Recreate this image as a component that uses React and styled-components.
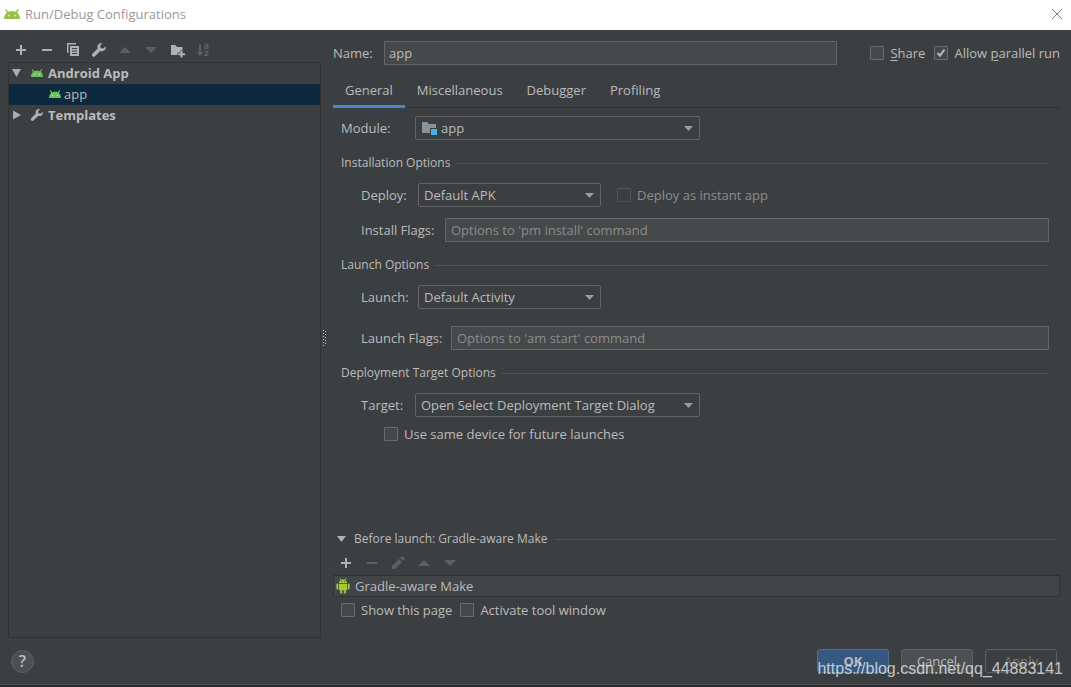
import React, { useState } from 'react';
import styled, { createGlobalStyle } from 'styled-components';

const tabs = ['General', 'Miscellaneous', 'Debugger', 'Profiling'];

export default function App() {
  const [tab, setTab] = useState('General');

  return (
    <Window>
      <GlobalStyle />
      <TitleBar>
        <AndroidHead width={16} height={10} color="#97c14b" />
        <WindowTitle>Run/Debug Configurations</WindowTitle>
        <CloseButton aria-label="Close">
          <svg width="12" height="12" viewBox="0 0 12 12" stroke="#7a7a7a" fill="none">
            <path d="M1 1L11 11M11 1L1 11" />
          </svg>
        </CloseButton>
      </TitleBar>

      <Content>
        <Sidebar>
          <Toolbar $side>
            <ToolButton aria-label="Add"><PlusIcon /></ToolButton>
            <ToolButton aria-label="Remove"><MinusIcon /></ToolButton>
            <ToolButton aria-label="Copy"><CopyIcon /></ToolButton>
            <ToolButton aria-label="Edit templates"><WrenchIcon size={16} /></ToolButton>
            <ToolButton aria-label="Move up" disabled><UpIcon /></ToolButton>
            <ToolButton aria-label="Move down" disabled><DownIcon /></ToolButton>
            <ToolButton aria-label="New folder"><FolderAddIcon /></ToolButton>
            <ToolButton aria-label="Sort" disabled><SortIcon /></ToolButton>
          </Toolbar>
          <Tree>
            <TreeRow $bold>
              <TreeArrow open />
              <TreeIcon><AndroidHead width={12} height={8} color="#6cc05c" /></TreeIcon>
              Android App
            </TreeRow>
            <TreeRow $child $selected>
              <TreeIcon><AndroidHead width={12} height={8} color="#6cc05c" /></TreeIcon>
              app
            </TreeRow>
            <TreeRow $bold>
              <TreeArrow />
              <TreeIcon><WrenchIcon size={14} /></TreeIcon>
              Templates
            </TreeRow>
          </Tree>
        </Sidebar>

        <Splitter>
          <svg width="4" height="16" viewBox="0 0 4 16" fill="none">
            <path d="M0.5 0V16M2.5 1V16" stroke="#c8c8c8" strokeDasharray="1 2" />
          </svg>
        </Splitter>

        <Main>
          <NameRow>
            <Label htmlFor="name" $width={51}>Name:</Label>
            <NameInput id="name" defaultValue="app" />
            <NameChecks>
              <Check>
                <input type="checkbox" />
                <span><u>S</u>hare</span>
              </Check>
              <Check>
                <input type="checkbox" defaultChecked />
                <span>Allow <u>p</u>arallel run</span>
              </Check>
            </NameChecks>
          </NameRow>

          <Tabs role="tablist">
            {tabs.map((item) => (
              <Tab key={item} role="tab" aria-selected={item === tab} $active={item === tab} onClick={() => setTab(item)}>
                {item}
              </Tab>
            ))}
          </Tabs>

          <Form>
            <Row>
              <Label htmlFor="module" $width={74}>Module:</Label>
              <Dropdown id="module" options={['app']} icon={<ModuleIcon />} wide />
            </Row>

            <Section>Installation Options</Section>
            <Row $indent>
              <Label htmlFor="deploy" $width={57}>Deploy:</Label>
              <Dropdown id="deploy" options={['Default APK']} />
              <Check $disabled>
                <input type="checkbox" disabled />
                <span>Deploy as instant app</span>
              </Check>
            </Row>
            <Row $indent $top={11}>
              <Label htmlFor="installFlags" $width={84}>Install Flags:</Label>
              <TextInput id="installFlags" placeholder="Options to 'pm install' command" />
            </Row>

            <Section>Launch Options</Section>
            <Row $indent>
              <Label htmlFor="launch" $width={57}>Launch:</Label>
              <Dropdown id="launch" options={['Default Activity']} />
            </Row>
            <Row $indent $top={17}>
              <Label htmlFor="launchFlags" $width={90}>Launch Flags:</Label>
              <TextInput id="launchFlags" placeholder="Options to 'am start' command" />
            </Row>

            <Section>Deployment Target Options</Section>
            <Row $indent>
              <Label htmlFor="target" $width={54}>Target:</Label>
              <Dropdown id="target" options={['Open Select Deployment Target Dialog']} wide />
            </Row>
            <DeviceRow>
              <Check>
                <input type="checkbox" />
                <span>Use same device for future launches</span>
              </Check>
            </DeviceRow>
          </Form>

          <BeforeLaunch>
            <BeforeTitle>
              <svg width="9" height="6" viewBox="0 0 9 6" fill="#afb1b3"><path d="M0 0H9L4.5 6z" /></svg>
              Before launch: Gradle-aware Make
            </BeforeTitle>
            <Toolbar>
              <ToolButton aria-label="Add task"><PlusIcon /></ToolButton>
              <ToolButton aria-label="Remove task" disabled><MinusIcon /></ToolButton>
              <ToolButton aria-label="Edit task" disabled><PencilIcon /></ToolButton>
              <ToolButton aria-label="Move task up" disabled><UpIcon /></ToolButton>
              <ToolButton aria-label="Move task down" disabled><DownIcon /></ToolButton>
            </Toolbar>
            <TaskList>
              <li><RobotIcon />Gradle-aware Make</li>
            </TaskList>
            <LaunchChecks>
              <Check>
                <input type="checkbox" />
                <span>Show this page</span>
              </Check>
              <Check>
                <input type="checkbox" />
                <span>Activate tool window</span>
              </Check>
            </LaunchChecks>
          </BeforeLaunch>
        </Main>
      </Content>

      <Footer>
        <HelpButton aria-label="Help">?</HelpButton>
        <Actions>
          <Button $primary>OK</Button>
          <Button>Cancel</Button>
          <Button disabled>Apply</Button>
        </Actions>
        <Watermark>https://blog.csdn.net/qq_44883141</Watermark>
      </Footer>
      <BottomEdge />
    </Window>
  );
}

function Dropdown({ id, options, icon, wide }) {
  return (
    <SelectBox $wide={wide}>
      <Select id={id} $icon={!!icon}>
        {options.map((option) => (
          <option key={option}>{option}</option>
        ))}
      </Select>
      {icon && <SelectIcon>{icon}</SelectIcon>}
      <SelectArrow width="9" height="5" viewBox="0 0 9 5"><path d="M0 0H9L4.5 5z" /></SelectArrow>
    </SelectBox>
  );
}

/* Icons */
function AndroidHead({ width, height, color }) {
  return (
    <svg width={width} height={height} viewBox="0 0 16 10" preserveAspectRatio="none">
      <path d="M0 10C0.1 7 1 5 3 3.8L1 0.6L2 0L4.4 2.7C6.5 2.1 9.5 2.1 11.6 2.7L14 0L15 0.6L13 3.8C15 5 15.9 7 16 10z" fill={color} />
      <circle cx="4.8" cy="6.6" r="0.9" fill="#fff" fillOpacity="0.7" />
      <circle cx="11.2" cy="6.6" r="0.9" fill="#fff" fillOpacity="0.7" />
    </svg>
  );
}

function TreeArrow({ open }) {
  return (
    <TreeArrowBox>
      <svg width="10" height="10" viewBox="0 0 10 10" fill="#adadad">
        <path d={open ? 'M0 1H9L4.5 9z' : 'M1 0.5V9.5L9 5z'} />
      </svg>
    </TreeArrowBox>
  );
}

const PlusIcon = () => (
  <svg width="16" height="16" viewBox="0 0 16 16"><path d="M7 3H9V7H13V9H9V13H7V9H3V7H7z" /></svg>
);

const MinusIcon = () => (
  <svg width="16" height="16" viewBox="0 0 16 16"><path d="M3 7H13V9H3z" /></svg>
);

const CopyIcon = () => (
  <svg width="16" height="16" viewBox="0 0 16 16">
    <path d="M2 1H11V2.5H3.5V11H2z" />
    <path fillRule="evenodd" d="M5 4H14V14H5zM7 6V7H12V6zM7 8.5V9.5H12V8.5zM7 11V12H12V11z" />
  </svg>
);

const WrenchIcon = ({ size }) => (
  <svg width={size} height={size} viewBox="0 0 16 16" fill="#afb1b3">
    <path d="M14.6 4.4L12.2 6.6L9.7 6L9.1 3.8L11.5 1.3C9.7 0.8 7.8 1.4 6.9 3C6.3 4.1 6.3 5.3 6.7 6.4L1.4 11.7C0.8 12.4 0.8 13.4 1.5 14.2C2.2 14.9 3.3 14.9 4 14.2L9.2 9C10.7 9.6 12.6 9.2 13.8 7.9C14.7 6.9 15 5.6 14.6 4.4z" />
  </svg>
);

const UpIcon = () => (
  <svg width="16" height="16" viewBox="0 0 16 16"><path d="M2 11L8 5L14 11z" /></svg>
);

const DownIcon = () => (
  <svg width="16" height="16" viewBox="0 0 16 16"><path d="M2 5H14L8 11z" /></svg>
);

const FolderAddIcon = () => (
  <svg width="16" height="16" viewBox="0 0 16 16">
    <path d="M2 3H6.5L8 5H13.5V8.5H11V10.5H8.5V13H2z" />
    <path d="M11.5 9H13.5V11.3H16V13.2H13.5V15.5H11.5V13.2H9.2V11.3H11.5z" />
  </svg>
);

const SortIcon = () => (
  <svg width="16" height="16" viewBox="0 0 16 16">
    <path d="M4 2H6V10H8.5L5 14L1.5 10H4z" />
    <path fill="none" stroke="currentColor" strokeWidth="1.4" d="M9.6 2.4H12.8V6.8M12.8 4.4H10V6.4H12.8M9.6 9.4H13L10 13.4H13.4" />
  </svg>
);

const PencilIcon = () => (
  <svg width="16" height="16" viewBox="0 0 16 16">
    <path d="M2 14V11L9 4L12 7L5 14zM10 3L11.6 1.4Q12.3 1 13 1.6L14.4 3Q15 3.7 14.5 4.4L13 6z" />
  </svg>
);

const ModuleIcon = () => (
  <svg width="16" height="16" viewBox="0 0 16 16">
    <path d="M1 2H6L8 4H15V8H9V13H1z" fill="#87939a" />
    <path d="M10 9H16V15H10z" fill="#3eb5e5" />
  </svg>
);

const RobotIcon = () => (
  <svg width="14" height="16" viewBox="0 0 14 16" fill="#a4c639">
    <path d="M3 5C3.1 3.6 3.8 2.6 4.7 2L3.9 0.4L4.5 0.1L5.4 1.7C6.4 1.4 7.6 1.4 8.6 1.7L9.5 0.1L10.1 0.4L9.3 2C10.2 2.6 10.9 3.6 11 5z" />
    <path d="M3 5.7H11V12.2H9.8V15.5H7.8V12.2H6.2V15.5H4.2V12.2H3z" />
    <rect x="0.4" y="5.5" width="1.9" height="6" rx="0.9" />
    <rect x="11.7" y="5.5" width="1.9" height="6" rx="0.9" />
    <path d="M5 3.2H6V4H5zM8 3.2H9V4H8z" fill="#3c3f41" />
  </svg>
);

/* Styled Components */
const GlobalStyle = createGlobalStyle`
  * {
    box-sizing: border-box;
  }

  body {
    margin: 0;
    background: #3c3f41;
  }

  body, button, input, select {
    font-family: 'Open Sans', 'Noto Sans', sans-serif;
    font-size: 13px;
    color: #bbbbbb;
  }

  svg {
    display: block;
    flex-shrink: 0;
  }
`;

const Window = styled.div`
  display: flex;
  flex-direction: column;
  min-height: 100vh;
  line-height: 18px;
`;

const TitleBar = styled.header`
  display: flex;
  align-items: center;
  height: 30px;
  padding: 0 8px 2px 4px;
  background: #fff;
`;

const WindowTitle = styled.h1`
  flex: 1;
  margin: 0 0 0 5px;
  font-size: 13px;
  font-weight: 400;
  color: #999;
`;

const CloseButton = styled.button`
  padding: 0;
  border: 0;
  background: none;
`;

const Content = styled.div`
  display: flex;
  flex: 1;
`;

const Sidebar = styled.aside`
  display: flex;
  flex-direction: column;
  width: 313px;
  margin-left: 8px;
`;

const Toolbar = styled.div`
  display: flex;
  gap: 10px;
  padding: ${({ $side }) => ($side ? '12px 5px 4px' : '8px 5px 4px')};
`;

const ToolButton = styled.button`
  padding: 0;
  border: 0;
  background: none;
  color: #afb1b3;

  &:disabled {
    color: #5e6060;
  }

  svg {
    fill: currentColor;
  }
`;

const Tree = styled.ul`
  flex: 1;
  margin: 0;
  padding: 0;
  border: 1px solid #323232;
  list-style: none;
`;

const TreeRow = styled.li`
  display: flex;
  align-items: center;
  gap: ${({ $child }) => ($child ? 2 : 4)}px;
  height: 21px;
  padding-left: ${({ $child }) => ($child ? 39 : 3)}px;
  padding-bottom: 1px;
  font-weight: ${({ $bold }) => ($bold ? 700 : 400)};
  background: ${({ $selected }) => ($selected ? '#0d293e' : 'transparent')};
`;

const TreeArrowBox = styled.span`
  width: 14px;
`;

const TreeIcon = styled.span`
  display: flex;
  justify-content: center;
  width: 14px;
`;

const Splitter = styled.div`
  display: flex;
  align-items: center;
  width: 12px;
  padding: 8px 0 0 2px;
`;

const Main = styled.main`
  display: flex;
  flex: 1;
  flex-direction: column;
  padding: 11px 11px 19px 0;
`;

const NameRow = styled.div`
  display: flex;
  align-items: center;
`;

const Label = styled.label`
  flex-shrink: 0;
  width: ${({ $width }) => $width}px;
`;

const TextInput = styled.input`
  flex: 1;
  min-width: 0;
  height: 24px;
  padding: 0 5px;
  border: 1px solid #646464;
  background: #45494a;
  outline: none;

  &::placeholder {
    color: #8c8c8c;
    opacity: 1;
  }
`;

const NameInput = styled(TextInput)`
  padding: 0 4px;
`;

const NameChecks = styled.div`
  display: flex;
  gap: 9px;
  padding-left: 33px;
`;

const Check = styled.label`
  display: flex;
  align-items: center;
  gap: 6px;
  color: ${({ $disabled }) => ($disabled ? '#8c8c8c' : '#bbbbbb')};

  u {
    text-underline-offset: 2px;
  }

  input {
    appearance: none;
    width: 14px;
    height: 14px;
    margin: 0;
    border: 1px solid #6b6b6b;
    border-radius: 1px;
    background: #43494a;
  }

  input:disabled {
    border-color: #545556;
    background: #3c3f41;
  }

  input:checked {
    background: #43494a url("data:image/svg+xml,%3Csvg xmlns='http://www.w3.org/2000/svg' viewBox='0 0 12 12'%3E%3Cpath d='M2.5 6L5 8.7L9.5 2.5' fill='none' stroke='%23bbb' stroke-width='2'/%3E%3C/svg%3E");
  }
`;

const Tabs = styled.div`
  display: flex;
  margin-top: 8px;
  box-shadow: inset 0 -1px #323232;
`;

const Tab = styled.button`
  height: 35px;
  padding: 2px 12px 0;
  border: 0;
  border-bottom: 3px solid ${({ $active }) => ($active ? '#4a88c7' : 'transparent')};
  background: none;
`;

const Form = styled.form`
  padding: 8px 11px 0 8px;
`;

const Row = styled.div`
  display: flex;
  align-items: center;
  margin-top: ${({ $top }) => $top || 0}px;
  padding-left: ${({ $indent }) => ($indent ? 20 : 0)}px;

  ${Check} {
    margin-left: 16px;
  }
`;

const DeviceRow = styled.div`
  display: flex;
  margin-top: 8px;
  padding-left: 43px;
`;

const Section = styled.h2`
  display: flex;
  align-items: center;
  gap: 6px;
  margin: 15px 0 12px;
  font-size: 12px;
  font-weight: 400;
  line-height: 16px;

  &::after {
    content: '';
    flex: 1;
    height: 1px;
    background: #515355;
  }
`;

const SelectBox = styled.div`
  display: grid;
  align-items: center;
  width: ${({ $wide }) => ($wide ? 285 : 183)}px;

  > * {
    grid-area: 1 / 1;
  }
`;

const Select = styled.select`
  appearance: none;
  width: 100%;
  height: 24px;
  padding: 0 24px 0 ${({ $icon }) => ($icon ? 25 : 5)}px;
  border: 1px solid #646464;
  border-radius: 2px;
  background: #3c3f41;
  outline: none;
`;

const SelectIcon = styled.span`
  margin-left: 6px;
  pointer-events: none;
`;

const SelectArrow = styled.svg`
  justify-self: end;
  margin-right: 7px;
  fill: #9a9da0;
  pointer-events: none;
`;

const BeforeLaunch = styled.section`
  margin-top: auto;
`;

const BeforeTitle = styled(Section)`
  gap: 8px;
  margin: 0;
  padding: 0 3px 0 4px;
`;

const TaskList = styled.ul`
  margin: 0;
  padding: 0;
  border: 1px solid #323232;
  background: #414547;
  list-style: none;

  li {
    display: flex;
    align-items: center;
    gap: 5px;
    height: 20px;
    padding: 0 0 1px 2px;
  }
`;

const LaunchChecks = styled.div`
  display: flex;
  gap: 8px;
  padding: 4px 0 0 8px;
`;

const Footer = styled.footer`
  position: relative;
  display: flex;
  align-items: center;
  justify-content: space-between;
  padding: 11px 14px 11px 11px;
`;

const HelpButton = styled.button`
  width: 23px;
  height: 23px;
  padding: 0;
  border: 1px solid #5e6162;
  border-radius: 50%;
  background: #4c5052;
  font-size: 16px;
  font-weight: 600;
  line-height: 20px;
`;

const Actions = styled.div`
  display: flex;
  gap: 12px;
`;

const Button = styled.button`
  width: 72px;
  height: 24px;
  padding: 0;
  border: 1px solid ${({ $primary }) => ($primary ? '#4c708c' : '#5e6060')};
  border-radius: 3px;
  background: ${({ $primary }) => ($primary ? '#365880' : '#4c5052')};
  font-weight: ${({ $primary }) => ($primary ? 700 : 400)};

  &:disabled {
    background: #3c3f41;
    color: #777;
  }
`;

const Watermark = styled.span`
  position: absolute;
  right: 8px;
  bottom: 6px;
  font-family: 'Liberation Sans', Arial, sans-serif;
  font-size: 16px;
  color: rgba(255, 255, 255, 0.7);
  pointer-events: none;
`;

const BottomEdge = styled.div`
  height: 3px;
  border-top: 1px solid #515151;
  background: #2b2b2b;
`;
